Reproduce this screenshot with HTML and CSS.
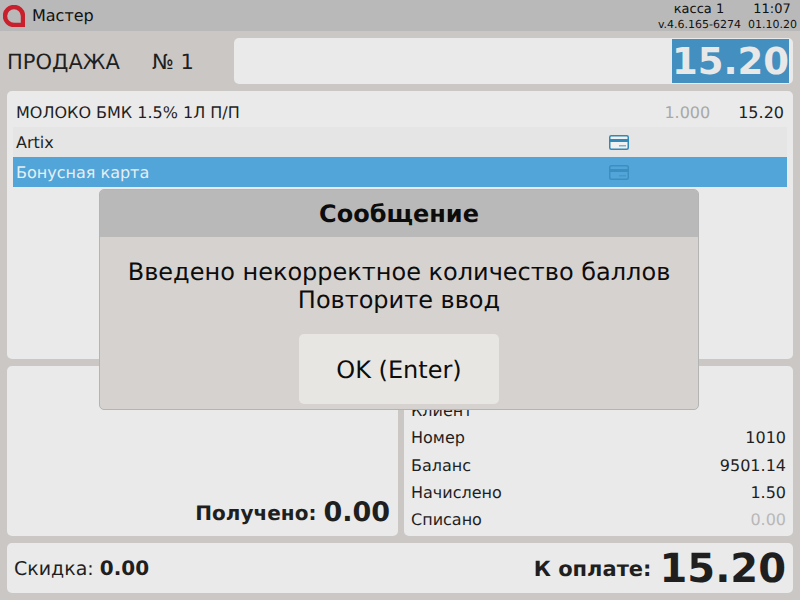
FILE: index.html
```html
<!DOCTYPE html>
<html lang="ru">
<head>
    <meta charset="UTF-8">
    <meta name="viewport" content="width=device-width, initial-scale=1.0">
    <title>Мастер</title>
    <link rel="stylesheet" href="styles.css">
</head>
<body>
    <div class="top-bar">
        <svg class="logo" width="22" height="22" viewBox="0 0 22 22">
            <path d="M20 20H11A9 9 0 1 1 20 11V20Z" fill="none" stroke="#c8202c" stroke-width="4.4"/>
        </svg>
        <span class="user">Мастер</span>
        <div class="top-info">
            <div class="info-row"><span class="kassa">касса 1</span><span class="time">11:07</span></div>
            <div class="info-row small"><span class="version">v.4.6.165-6274</span><span class="date">01.10.20</span></div>
        </div>
    </div>

    <div class="sale-row">
        <div class="sale-title">
            <span class="sale-name">ПРОДАЖА</span>
            <span class="sale-num">№ 1</span>
        </div>
        <div class="input-box"><span class="input-value">15.20</span></div>
    </div>

    <div class="panel items">
        <div class="item-row">
            <span class="item-name">МОЛОКО БМК 1.5% 1Л П/П</span>
            <span class="item-qty">1.000</span>
            <span class="item-sum">15.20</span>
        </div>
        <div class="sub-row">
            <span class="sub-name">Artix</span>
            <svg class="card-icon" width="20" height="15" viewBox="0 0 20 15">
                <rect class="card-body" x="0.75" y="0.75" width="18.5" height="13.5" rx="1.5" stroke="currentColor" stroke-width="1.5"/>
                <rect x="1" y="4" width="18" height="3" fill="currentColor"/>
                <rect x="10" y="10" width="7" height="1.5" fill="currentColor" opacity="0.6"/>
            </svg>
        </div>
        <div class="sub-row selected">
            <span class="sub-name">Бонусная карта</span>
            <svg class="card-icon" width="20" height="15" viewBox="0 0 20 15">
                <rect class="card-body" x="0.75" y="0.75" width="18.5" height="13.5" rx="1.5" stroke="currentColor" stroke-width="1.5"/>
                <rect x="1" y="4" width="18" height="3" fill="currentColor"/>
                <rect x="10" y="10" width="7" height="1.5" fill="currentColor" opacity="0.6"/>
            </svg>
        </div>
    </div>

    <div class="middle">
        <div class="panel received">
            <span class="received-label">Получено:</span>
            <span class="received-value">0.00</span>
        </div>
        <div class="panel client">
            <div class="client-row"><span>Клиент</span></div>
            <div class="client-row"><span>Номер</span><span>1010</span></div>
            <div class="client-row"><span>Баланс</span><span>9501.14</span></div>
            <div class="client-row"><span>Начислено</span><span>1.50</span></div>
            <div class="client-row"><span>Списано</span><span class="muted">0.00</span></div>
        </div>
    </div>

    <div class="panel totals">
        <div class="discount">Скидка: <b>0.00</b></div>
        <div class="to-pay">
            <span class="to-pay-label">К оплате:</span>
            <span class="to-pay-value">15.20</span>
        </div>
    </div>

    <!-- Message dialog -->
    <div class="dialog">
        <div class="dialog-title">Сообщение</div>
        <div class="dialog-body">
            <p class="dialog-text">Введено некорректное количество баллов<br>Повторите ввод</p>
            <div class="dialog-button">OK (Enter)</div>
        </div>
    </div>
</body>
</html>
```

FILE: styles.css
```css
html, body {
    height: 100%;
}

body {
    font-family: "DejaVu Sans", sans-serif;
    text-rendering: geometricPrecision;
    margin: 0;
    padding: 0;
    width: 800px;
    height: 600px;
    overflow: hidden;
    background-color: #cbc7c4;
    color: #1f1f1f;
    display: flex;
    flex-direction: column;
    position: relative;
}

.top-bar {
    background-color: #b9b9b9;
    height: 31px;
    display: flex;
    align-items: center;
    padding: 0 3px;
    flex-shrink: 0;
}

.logo {
    margin-right: 7px;
}

.user {
    font-size: 16px;
    color: #111;
}

.top-info {
    margin-left: auto;
    padding-top: 2px;
    color: #111;
}

.info-row {
    display: flex;
    justify-content: flex-end;
    font-size: 13px;
    line-height: 16px;
}

.info-row.small {
    font-size: 11px;
    line-height: 14px;
}

.kassa {
    width: 96px;
    text-align: center;
}

.time {
    width: 50px;
    text-align: center;
}

.version {
    margin-right: 7px;
}

.sale-row {
    display: flex;
    align-items: center;
    height: 46px;
    margin: 7px 7px 7px 7px;
    flex-shrink: 0;
}

.sale-title {
    width: 227px;
    font-size: 21px;
    display: flex;
    flex-shrink: 0;
    padding-top: 2px;
}

.sale-name {
    width: 145px;
}

.input-box {
    flex: 1;
    height: 46px;
    background-color: #eaeaea;
    border-radius: 5px;
    display: flex;
    justify-content: flex-end;
    align-items: center;
    padding-right: 4px;
}

.input-value {
    background-color: #438fbf;
    color: #e8e8e8;
    font-size: 37px;
    font-weight: bold;
    height: 44px;
    line-height: 45px;
}

.panel {
    background-color: #eaeaea;
    border-radius: 5px;
}

.items {
    height: 268px;
    padding: 6px 6px 0;
    box-sizing: border-box;
    margin: 0 7px;
    flex-shrink: 0;
}

.item-row {
    display: flex;
    align-items: center;
    height: 30px;
    font-size: 16px;
    padding: 0 3px;
}

.item-name {
    flex: 1;
}

.item-qty {
    color: #a8a8a8;
    margin-right: 28px;
}

.sub-row {
    display: flex;
    align-items: center;
    height: 30px;
    font-size: 16px;
    padding-left: 3px;
    background-color: #e5e5e5;
}

.sub-row.selected {
    background-color: #52a5d9;
    color: #e6eef2;
}

.sub-name {
    width: 593px;
}

.card-icon {
    color: #3089b8;
}

.card-body {
    fill: #f1f1f1;
}

.selected .card-icon {
    color: #3a8fbf;
}

.selected .card-body {
    fill: none;
}

.middle {
    display: flex;
    gap: 6px;
    height: 170px;
    margin: 7px 7px;
    flex-shrink: 0;
}

.received {
    width: 391px;
    display: flex;
    justify-content: flex-end;
    align-items: flex-end;
    gap: 7px;
    padding: 0 8px 7px 0;
    box-sizing: border-box;
}

.received-label {
    font-size: 20px;
    font-weight: bold;
    line-height: 32px;
}

.received-value {
    font-size: 27px;
    font-weight: bold;
    line-height: 32px;
}

.client {
    flex: 1;
    padding: 31px 7px 3px;
    box-sizing: border-box;
}

.client-row {
    display: flex;
    justify-content: space-between;
    font-size: 16px;
    height: 27.3px;
    line-height: 27px;
}

.muted {
    color: #b8b8b8;
}

.totals {
    display: flex;
    justify-content: space-between;
    align-items: center;
    height: 50px;
    margin: 0 7px;
    padding: 0 7px;
    flex-shrink: 0;
}

.discount {
    font-size: 19px;
}

.discount b {
    font-size: 20px;
}

.to-pay {
    display: flex;
    align-items: center;
    gap: 8px;
    padding-top: 1px;
}

.to-pay-label {
    font-size: 21px;
    font-weight: bold;
}

.to-pay-value {
    font-size: 40px;
    font-weight: bold;
}

.dialog {
    position: absolute;
    left: 99px;
    top: 189px;
    width: 600px;
    height: 221px;
    box-sizing: border-box;
    border: 1px solid #b4b4b4;
    border-radius: 5px;
    background-color: #d6d2cf;
    color: #0c0c0c;
    overflow: hidden;
    display: flex;
    flex-direction: column;
}

.dialog-title {
    background-color: #b9b9b9;
    height: 47px;
    line-height: 49px;
    text-align: center;
    font-size: 24px;
    font-weight: bold;
    flex-shrink: 0;
}

.dialog-body {
    flex: 1;
    display: flex;
    flex-direction: column;
    align-items: center;
}

.dialog-text {
    margin: 21px 0 20px;
    font-size: 24px;
    line-height: 28px;
    text-align: center;
}

.dialog-button {
    width: 200px;
    height: 70px;
    line-height: 73px;
    background-color: #e7e6e3;
    border-radius: 5px;
    text-align: center;
    font-size: 24px;
}
```
